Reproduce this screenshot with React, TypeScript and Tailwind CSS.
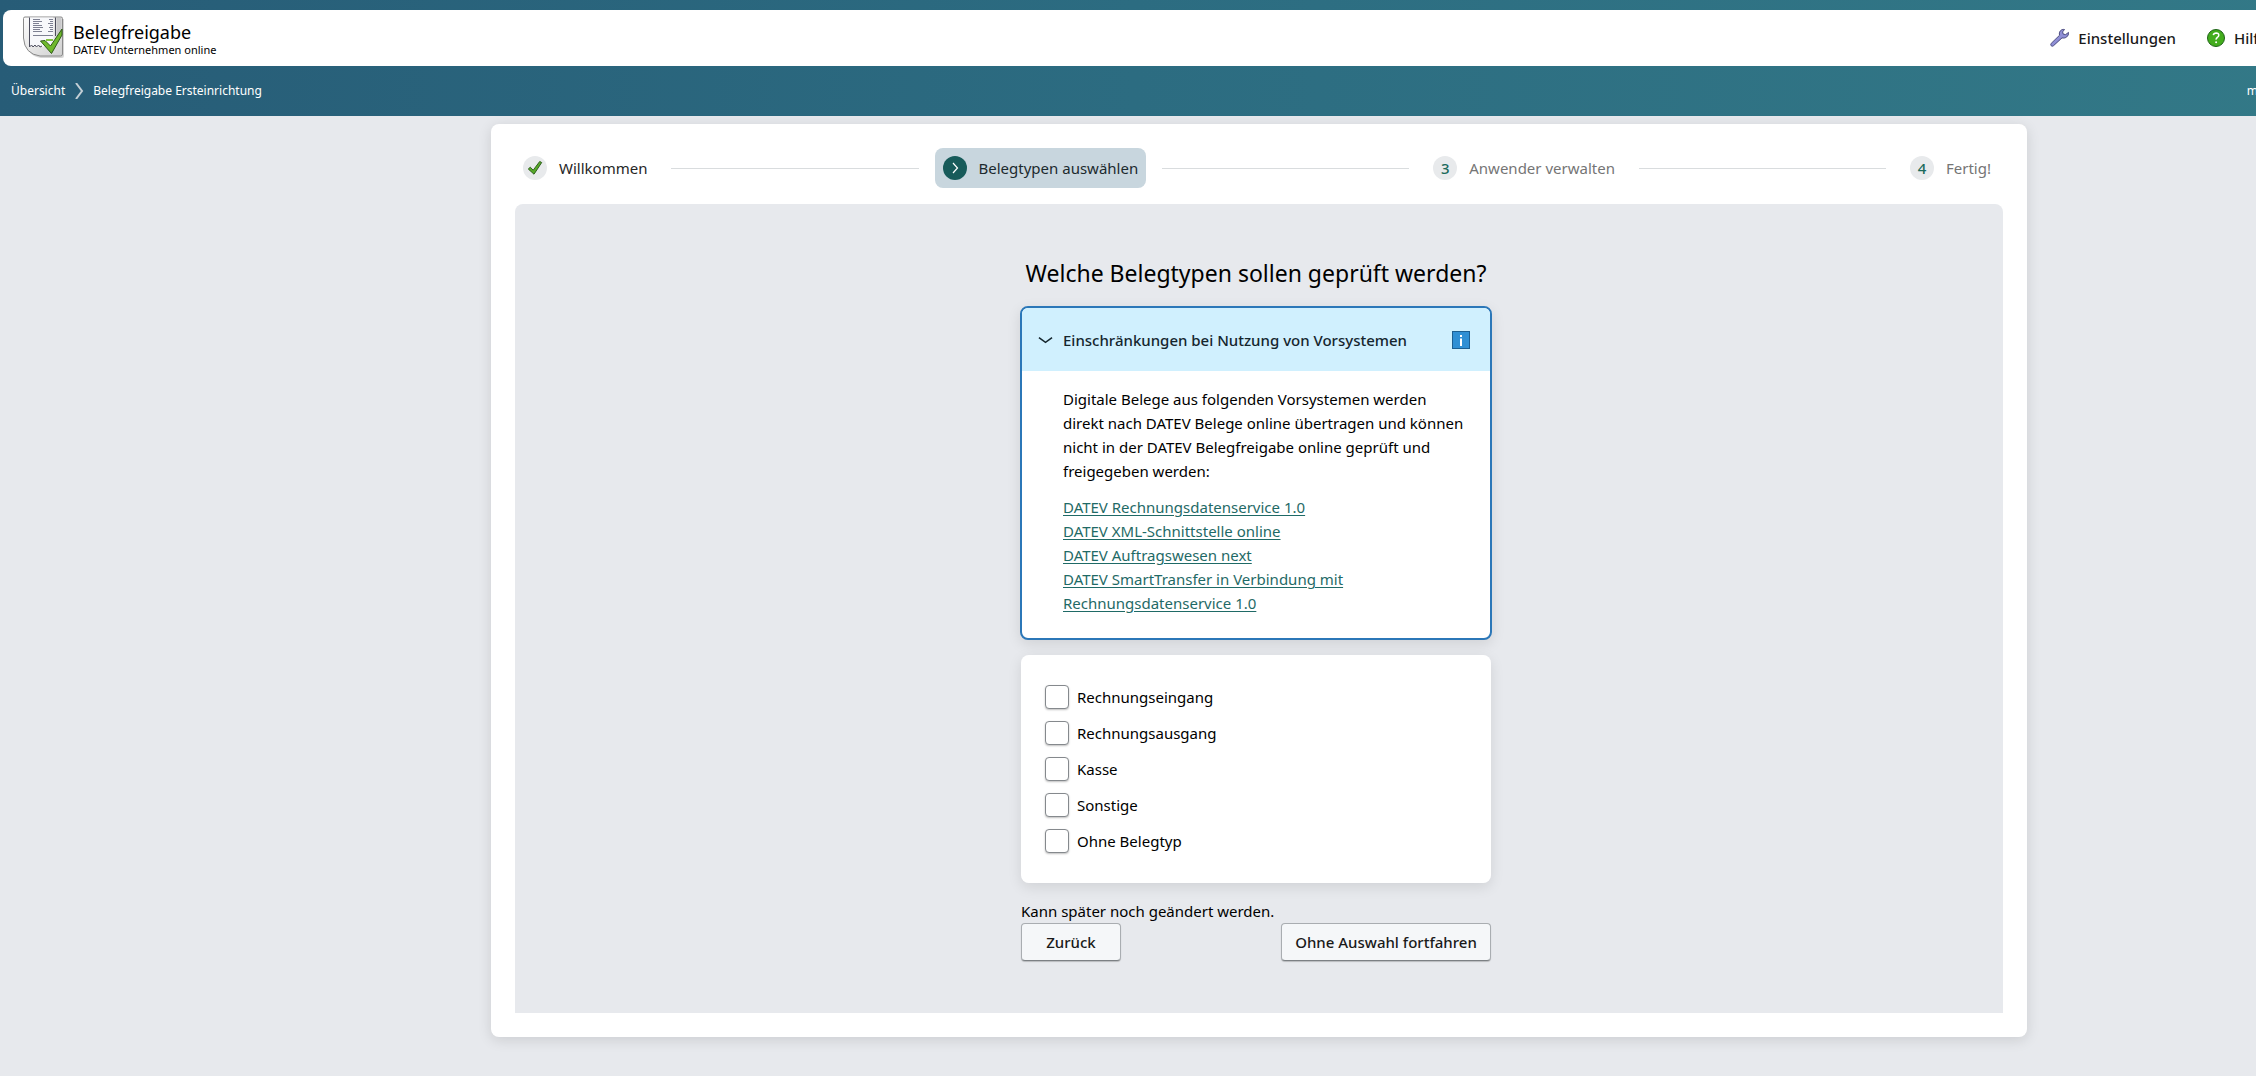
import React, { useState } from "react";

const links = [
  "DATEV Rechnungsdatenservice 1.0",
  "DATEV XML-Schnittstelle online",
  "DATEV Auftragswesen next",
  "DATEV SmartTransfer in Verbindung mit Rechnungsdatenservice 1.0",
];

const voucherTypes = ["Rechnungseingang", "Rechnungsausgang", "Kasse", "Sonstige", "Ohne Belegtyp"];

function AppLogo() {
  return (
    <svg className="size-11 shrink-0" viewBox="0 0 44 44" aria-hidden="true">
      <defs>
        <linearGradient id="sheet" x1="0" y1="0" x2="1" y2="1">
          <stop offset="0" stopColor="#fdfdfd" />
          <stop offset="1" stopColor="#d0d0d0" />
        </linearGradient>
      </defs>
      <path d="M5 3h37v37q0 2-2 2H19Q5 40 3 24z" fill="#000" opacity=".16" />
      <path d="M3 1h36q1.500 0 1.500 1.500V38q0 2-2 2H18Q2.500 38 1.500 22V2.500Q1.500 1 3 1z" fill="url(#sheet)" stroke="#8a8a8a" />
      <path d="M7.500 1.500v29.500l2-1.500 2 1.500 2-1.500 2 1.500 2-1.500 2 1.500 12-2V1.500z" fill="#f7f8fb" />
      <path d="M34.500 2v24l5-8V2z" fill="#c9c9cb" />
      <path d="M7.500 1.500V31l2-2 1.500 2 2-2 1.500 2 2-2 1.500 2 2-1M33.500 1.500V20" fill="none" stroke="#4c4c5c" />
      <path
        d="M11 3.500h7M11 5.500h9M11 7.500h6M11 9.500h9M11 11.500h10M11 13.500h7M11 15.500h9M27 3.500h4M28 5.500h3M26 7.500h5M28 9.500h3M27 11.500h4M28 13.500h3M26 15.500h5M11 19.500h20"
        stroke="#7d8092"
      />
      <path d="M24 24h7" stroke="#84c341" strokeWidth="2" />
      <path d="M18.500 25l4.500-.5 5.500 5.500L40 13v6L29.500 37.500z" fill="#6fb92c" stroke="#2f5a18" strokeLinejoin="round" />
    </svg>
  );
}

function WrenchIcon() {
  return (
    <svg className="size-5" viewBox="0 0 20 20" aria-hidden="true">
      <path
        d="M14.500 1.500C11 .8 8.500 4 9.600 7.200L1.200 15.400c-.6.600-.6 1.600 0 2.300s1.700.6 2.300 0L12 9.900c3.500.9 6.900-1.700 6.500-5.500l-2.900 2.200-2.400-.5-.6-2.200z"
        fill="#8f8fd6"
        stroke="#4b4b80"
        strokeLinejoin="round"
      />
    </svg>
  );
}

function HelpIcon() {
  return (
    <svg className="size-5" viewBox="0 0 20 20" aria-hidden="true">
      <circle cx="10" cy="10" r="8.500" fill="#43ad1d" stroke="#1f6318" />
      <path d="M7.300 7.200Q7.700 5 10.200 5q2.700.1 2.600 2.300 0 1.200-1.500 2.200-1.300.8-1.200 2.100" fill="none" stroke="#fff" strokeWidth="1.500" />
      <circle cx="10.100" cy="14.300" r="1" fill="#fff" />
    </svg>
  );
}

function CheckIcon() {
  return (
    <svg className="size-4" viewBox="0 0 16 16" aria-hidden="true">
      <path d="M1.300 9l2-1.800 2.900 3L12.700 1.500l2 1L7 14.200z" fill="#57ab27" stroke="#2f5f1e" strokeLinejoin="round" />
    </svg>
  );
}

function Chevron({ className, down = false }: { className: string; down?: boolean }) {
  return (
    <svg className={className} viewBox="0 0 16 16" fill="none" stroke="currentColor" aria-hidden="true">
      <path d={down ? "M1 6l7 5 7-5" : "M6 3l4.500 5L6 13"} strokeWidth={down ? 1.6 : 1.2} />
    </svg>
  );
}

function Step({ label, marker, state }: { label: string; marker?: string; state: "done" | "active" | "open" }) {
  const box = state === "active" ? "bg-[#c8d6de] text-[#1c2a2e]" : state === "done" ? "text-[#262626]" : "text-[#757575]";
  const dot = state === "active" ? "bg-[#175b5a] text-white" : "bg-[#e8eaec] text-[#1b6b5c]";
  return (
    <li className={`flex h-10 shrink-0 items-center gap-3 rounded-lg px-2 ${box}`} aria-current={state === "active" ? "step" : undefined}>
      <span className={`flex size-6 items-center justify-center rounded-full font-medium ${dot}`}>
        {state === "done" ? <CheckIcon /> : state === "active" ? <Chevron className="size-4" /> : marker}
      </span>
      {label}
    </li>
  );
}

function StepLine() {
  return <li className="mx-4 h-px flex-1 bg-[#d9dcde]" aria-hidden="true" />;
}

const buttonClass =
  "h-[38px] rounded border border-[#a9adb1] border-b-[#7c8084] bg-[#f5f7f9] font-medium text-[#1a1a1a] shadow-[0_1px_1px_rgba(0,0,0,0.2)]";

export default function App() {
  const [open, setOpen] = useState(true);
  return (
    <div className="min-h-screen overflow-x-hidden bg-[#e7e9ed] font-['Noto_Sans',sans-serif] text-[15px] leading-6 text-black">
      <div className="w-[calc(100%+262px)]">
        <header className="bg-linear-to-r from-[#275c77] via-[#2c6c81] via-45% to-[#347b88] pt-2.5 pl-[3px]">
          <div className="flex h-14 items-center rounded-lg bg-white pr-[206px] pl-[19px]">
            <AppLogo />
            <div className="ml-[7px] flex flex-col pt-1">
              <span className="text-[18px] leading-5">Belegfreigabe</span>
              <span className="text-[11px] leading-4">DATEV Unternehmen online</span>
            </div>
            <nav className="ml-auto flex items-center gap-[30px] text-[#1a1a1a]">
              <button type="button" className="flex items-center gap-2 font-medium">
                <WrenchIcon />
                Einstellungen
              </button>
              <button type="button" className="flex w-[106px] items-center gap-2 font-medium">
                <HelpIcon />
                Hilfe
              </button>
            </nav>
          </div>
          <div className="flex h-[50px] items-center pr-[260px] pl-2 text-xs text-white">
            <nav aria-label="Brotkrumen" className="flex items-center">
              <a href="#uebersicht">Übersicht</a>
              <svg className="mx-1.5 h-4 w-4 text-[#c3cfd6]" viewBox="0 0 16 16" fill="none" stroke="currentColor" strokeWidth="2" aria-hidden="true">
                <path d="M5 0l6 8-6 8" />
              </svg>
              <a href="#ersteinrichtung">Belegfreigabe Ersteinrichtung</a>
            </nav>
            <span className="ml-auto">m</span>
          </div>
        </header>

        <main className="mx-auto mt-2 max-w-[1536px] rounded-lg bg-white p-6 shadow-[0_3px_14px_rgba(0,0,0,0.12)]">
          <ol className="flex items-center pr-1">
            <Step label="Willkommen" state="done" />
            <StepLine />
            <Step label="Belegtypen auswählen" state="active" />
            <StepLine />
            <Step label="Anwender verwalten" marker="3" state="open" />
            <StepLine />
            <Step label="Fertig!" marker="4" state="open" />
          </ol>

          <section className="mt-4 rounded-t-lg bg-[#e7e9ed] pt-[53px] pr-1.5 pb-[52px]">
            <div className="mx-auto max-w-[472px]">
              <h1 className="text-center text-[23px] leading-8">Welche Belegtypen sollen geprüft werden?</h1>

              <div className="mt-[17px] overflow-hidden rounded-lg border-2 border-[#2b77b8] bg-white shadow-[0_4px_14px_rgba(0,0,0,0.1)]">
                <button
                  type="button"
                  aria-expanded={open}
                  onClick={() => setOpen(!open)}
                  className="flex h-[63px] w-full items-center bg-[#d0f0fe] pr-5 pl-4 font-medium text-[#15262e]"
                >
                  <Chevron className="mr-[10px] size-[15px]" down />
                  Einschränkungen bei Nutzung von Vorsystemen
                  <svg className="ml-auto size-[18px]" viewBox="0 0 18 18" aria-hidden="true">
                    <rect x=".5" y=".5" width="17" height="17" fill="#2f8fd4" stroke="#1c5f92" />
                    <path d="M8 4h2v2H8zM8 7.500h2V15H8z" fill="#fff" />
                  </svg>
                </button>
                {open && (
                  <div className="pt-4 pr-5 pb-[23px] pl-[41px]">
                    <p>
                      Digitale Belege aus folgenden Vorsystemen werden direkt nach DATEV Belege online übertragen und können nicht in
                      der DATEV Belegfreigabe online geprüft und freigegeben werden:
                    </p>
                    <ul className="mt-3 pr-16 text-[#1f6a66]">
                      {links.map((l) => (
                        <li key={l}>
                          <a href="#info" className="underline underline-offset-2">
                            {l}
                          </a>
                        </li>
                      ))}
                    </ul>
                  </div>
                )}
              </div>

              <fieldset className="mx-px mt-[15px] flex flex-col gap-3 rounded-lg bg-white px-6 py-[30px] shadow-[0_4px_14px_rgba(0,0,0,0.1)]">
                {voucherTypes.map((t) => (
                  <label key={t} className="flex items-center gap-2">
                    <input
                      type="checkbox"
                      className="size-6 appearance-none rounded border border-[#85898d] bg-white shadow-[0_1px_2px_rgba(0,0,0,0.25)] checked:bg-[#175b5a]"
                    />
                    {t}
                  </label>
                ))}
              </fieldset>

              <p className="mx-px mt-4">Kann später noch geändert werden.</p>
              <div className="mx-px flex justify-between">
                <button type="button" className={`${buttonClass} w-[100px]`}>
                  Zurück
                </button>
                <button type="button" className={`${buttonClass} w-[210px]`}>
                  Ohne Auswahl fortfahren
                </button>
              </div>
            </div>
          </section>
        </main>
      </div>
    </div>
  );
}
